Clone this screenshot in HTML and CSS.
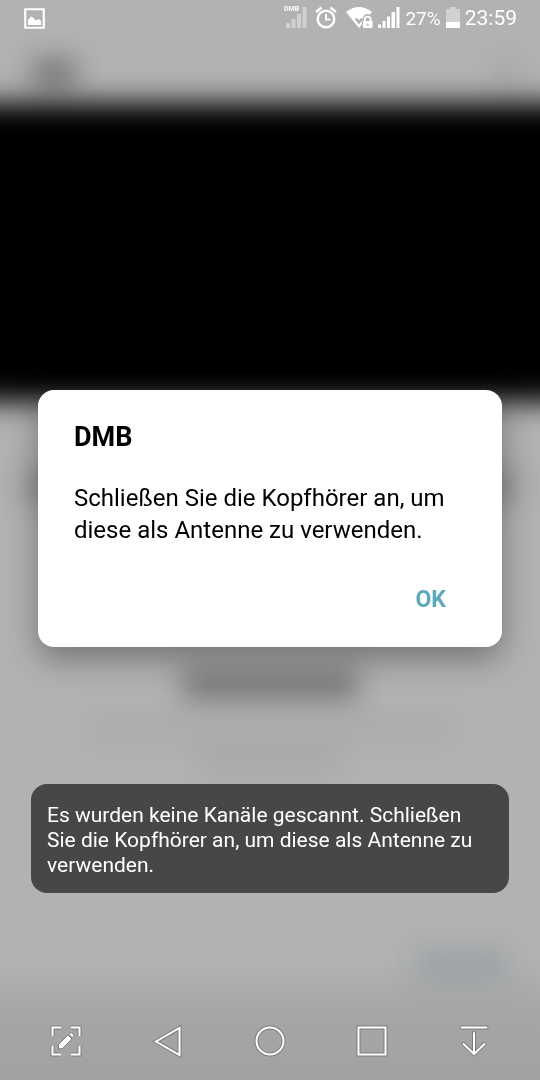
FILE: index.html
```html
<!DOCTYPE html>
<html lang="de">
<head>
  <meta charset="UTF-8">
  <meta name="viewport" content="width=device-width, initial-scale=1">
  <title>DMB</title>
<link rel="stylesheet" href="styles.css">
</head>
<body>
<div class="backdrop" aria-hidden="true">
  <div class="b-header"><i class="smudge s-title"></i><i class="smudge s-more"></i></div>
  <div class="b-video"></div>
  <div class="b-content">
    <i class="smudge s-wide"></i>
    <i class="smudge s-heading"></i>
    <i class="smudge s-line"></i>
    <i class="smudge s-short"></i>
  </div>
  <div class="b-footer"><i class="smudge s-link"></i></div>
</div>

<div class="screen">
  <header class="status">
    <svg class="photo" width="21" height="21" viewBox="0 0 21 21">
      <path d="M1.250 1.250h18.500v18.500H1.250z" fill="none" stroke="#fff" stroke-width="2.200"/>
      <path d="M4 17v-5l3-3.500 2 1 3 3 3-1.500 2 2v4z" fill="#fff"/>
    </svg>
    <div class="indicators">
      <svg width="24" height="26" viewBox="0 1 24 26">
        <text class="dmb" x="0" y="7">DMB</text>
        <path d="M2 19h4v5H2zM7.500 15h4v9h-4zM13 10h4v14h-4zM18.500 3h4v21h-4z" fill="#fff" opacity=".4"/>
      </svg>
      <svg class="alarm" width="22" height="26" viewBox="0 1 22 26" fill="none" stroke="#fff">
        <circle cx="11" cy="15" r="8.300" stroke-width="2.400"/>
        <path d="M1 8l5.500-4.500M21 8l-5.500-4.500" stroke-width="2.400"/>
        <path d="M11 10v5.500h4.500" stroke-width="2"/>
      </svg>
      <svg class="wifi" width="27" height="26" viewBox="0 1 27 26">
        <path d="M0 8Q13 -2 26 8L13 24z" fill="#fff"/>
        <path d="M8.500 15q4.500-3 9 0L13 20.500z" fill="#b2b2b2"/>
        <path d="M9.500 13l3.500 3 3.500-3z" fill="#fff"/>
        <path d="M16 25v-8.500h1v-2a4.500 4.500 0 0 1 9 0v2h1V25z" fill="#b2b2b2"/>
        <path d="M17 17h9.500v7H17z" fill="#fff"/>
        <path d="M18.800 17.500v-2a2.900 2.900 0 0 1 5.800 0v2" fill="none" stroke="#fff" stroke-width="1.900"/>
        <circle cx="21.700" cy="20.500" r="1.100" fill="#b2b2b2"/>
      </svg>
      <svg class="signal" width="22" height="26" viewBox="0 1 22 26" fill="#fff">
        <path d="M0 20.500h3V24H0zM4.500 17h3v7h-3zM9 12.500h3V24H9zM13.500 8h3.500v16h-3.500zM18.500 3h3v21h-3z"/>
      </svg>
      <span class="percent">27%</span>
      <svg class="battery" width="14" height="26" viewBox="0 1 14 26" fill="#fff">
        <path d="M0 5h4V3h6v2h4v13H0z" opacity=".4"/>
        <path d="M0 18h14v6H0z"/>
      </svg>
      <time class="clock">23:59</time>
    </div>
  </header>

  <main class="main">
    <section class="dialog" role="alertdialog" aria-labelledby="title" aria-describedby="message">
      <h1 id="title">DMB</h1>
      <p id="message">Schließen Sie die Kopfhörer an, um diese als Antenne zu verwenden.</p>
      <div class="actions"><button class="ok" type="button">OK</button></div>
    </section>
    <p class="toast" role="status">Es wurden keine Kanäle gescannt. Schließen Sie die Kopfhörer an, um diese als Antenne zu verwenden.</p>
  </main>

  <nav class="nav">
    <button type="button" aria-label="Capture+">
      <svg width="34" height="34" viewBox="0 0 34 34">
        <path class="edge" d="M3.500 12V3.500H12M22 3.500h8.500V12M30.500 22v8.500H22M12 30.500H3.500V22"/>
        <path class="line" d="M3.500 12V3.500H12M22 3.500h8.500V12M30.500 22v8.500H22M12 30.500H3.500V22"/>
        <path class="pen" d="M9.500 20.500L19 11l4 4-9.500 9.500-4 .5z"/>
        <path class="pen" d="M19.800 10.200l1-1q1.700-1 3.200.5t.5 3.200l-1 1z"/>
      </svg>
    </button>
    <button type="button" aria-label="Zurück">
      <svg width="34" height="34" viewBox="0 0 34 34">
        <path class="edge" d="M28.500 4v27L5 17.500z"/>
        <path class="line" d="M28.500 4v27L5 17.500z"/>
      </svg>
    </button>
    <button type="button" aria-label="Startseite">
      <svg width="34" height="34" viewBox="0 0 34 34">
        <circle class="edge" cx="17" cy="17" r="13.500"/>
        <circle class="line" cx="17" cy="17" r="13.500"/>
      </svg>
    </button>
    <button type="button" aria-label="Letzte Apps">
      <svg width="34" height="34" viewBox="0 0 34 34">
        <path class="edge" d="M3.500 3.500h27v27h-27z"/>
        <path class="line" d="M3.500 3.500h27v27h-27z"/>
      </svg>
    </button>
    <button type="button" aria-label="Benachrichtigungen">
      <svg class="round" width="34" height="34" viewBox="0 0 34 34">
        <path class="edge" d="M4.500 3.500h25M17 9v20M6.500 20L17 30l10.500-10"/>
        <path class="line" d="M4.500 3.500h25M17 9v20M6.500 20L17 30l10.500-10"/>
      </svg>
    </button>
  </nav>
</div>
</body>
</html>
```
FILE: styles.css
```css
* {
  box-sizing: border-box;
}
body {
  margin: 0;
  background: #b2b2b2;
  font-family: Roboto, "Noto Sans", sans-serif;
}
svg {
  display: block;
}
button {
  border: 0;
  padding: 0;
  background: none;
  font: inherit;
  cursor: pointer;
}

/* blurred app behind the dialog */
.backdrop {
  position: fixed;
  inset: 0;
  z-index: -1;
  display: flex;
  flex-direction: column;
  overflow: hidden;
  background: linear-gradient(to top, #a1a2a3, #a5a6a7 70px, #b2b2b2 120px);
}
.smudge {
  display: block;
  filter: blur(14px);
}
.b-header {
  height: 103px;
  padding: 60px 24px 0 32px;
  display: flex;
  justify-content: space-between;
}
.b-video {
  height: 299px;
  margin: 0 -48px;
  background: #000;
  filter: blur(14px);
}
.b-content {
  flex: 1;
  padding-top: 70px;
  display: flex;
  flex-direction: column;
  align-items: center;
}
.s-title {
  width: 44px;
  height: 28px;
  background: rgba(0, 0, 0, .36);
}
.s-more {
  width: 20px;
  height: 28px;
  background: rgba(0, 0, 0, .08);
}
.s-wide {
  align-self: stretch;
  margin: 0 24px;
  height: 28px;
  background: rgba(0, 0, 0, .22);
}
.s-heading {
  width: 176px;
  height: 28px;
  margin-top: 170px;
  background: rgba(0, 0, 0, .36);
}
.s-line {
  width: 360px;
  height: 16px;
  margin-top: 24px;
  background: rgba(0, 0, 0, .06);
}
.s-short {
  width: 144px;
  height: 16px;
  margin-top: 16px;
  background: rgba(0, 0, 0, .08);
}
.b-footer {
  height: 130px;
  padding: 0 32px;
  display: flex;
  justify-content: flex-end;
}
.s-link {
  width: 92px;
  height: 28px;
  background: rgba(60, 90, 105, .2);
}

.screen {
  min-height: 100vh;
  display: flex;
  flex-direction: column;
}

/* status bar */
.status {
  height: 36px;
  padding: 0 23px 0 24px;
  display: flex;
  align-items: center;
  justify-content: space-between;
  color: #fff;
}
.indicators {
  display: flex;
  align-items: center;
  gap: 5px;
}
.dmb {
  font: bold 7px Roboto, sans-serif;
  fill: #fff;
}
.alarm {
  margin: 0 4px 0 2px;
}
.percent {
  font-size: 19px;
}
.clock {
  font-size: 21px;
}

/* dialog stays centred, the toast hangs below it */
.main {
  flex: 1;
  display: grid;
  grid-template-rows: 1fr auto 1fr;
}
.dialog {
  grid-row: 2;
  margin: 0 38px;
  padding: 32px 36px 27px;
  border-radius: 16px;
  background: #fff;
  color: #000;
  box-shadow: 0 12px 32px rgba(0, 0, 0, .35);
}
.dialog h1 {
  margin: 0;
  font-size: 27px;
  line-height: 30px;
}
.dialog p {
  margin: 30px 0 0;
  font-size: 24px;
  line-height: 32px;
}
.actions {
  margin-top: 34px;
  display: flex;
  justify-content: flex-end;
}
.ok {
  padding: 0 20px;
  font-size: 23px;
  font-weight: bold;
  line-height: 40px;
  color: #5caabc;
}
.toast {
  grid-row: 3;
  align-self: end;
  margin: 0 31px 108px;
  padding: 19px 16px 15px;
  border-radius: 16px;
  background: #474747;
  color: #fff;
  font-size: 21px;
  line-height: 25px;
}

/* navigation bar */
.nav {
  height: 79px;
  padding: 0 15px;
  display: flex;
}
.nav button {
  flex: 1;
  display: flex;
  align-items: center;
  justify-content: center;
}
.edge,
.line {
  fill: none;
}
.edge {
  stroke: #7b7c7d;
  stroke-width: 4;
}
.line {
  stroke: #fff;
  stroke-width: 2;
}
.round path {
  stroke-linecap: round;
}
.pen {
  fill: #fff;
  stroke: #7b7c7d;
}
```
